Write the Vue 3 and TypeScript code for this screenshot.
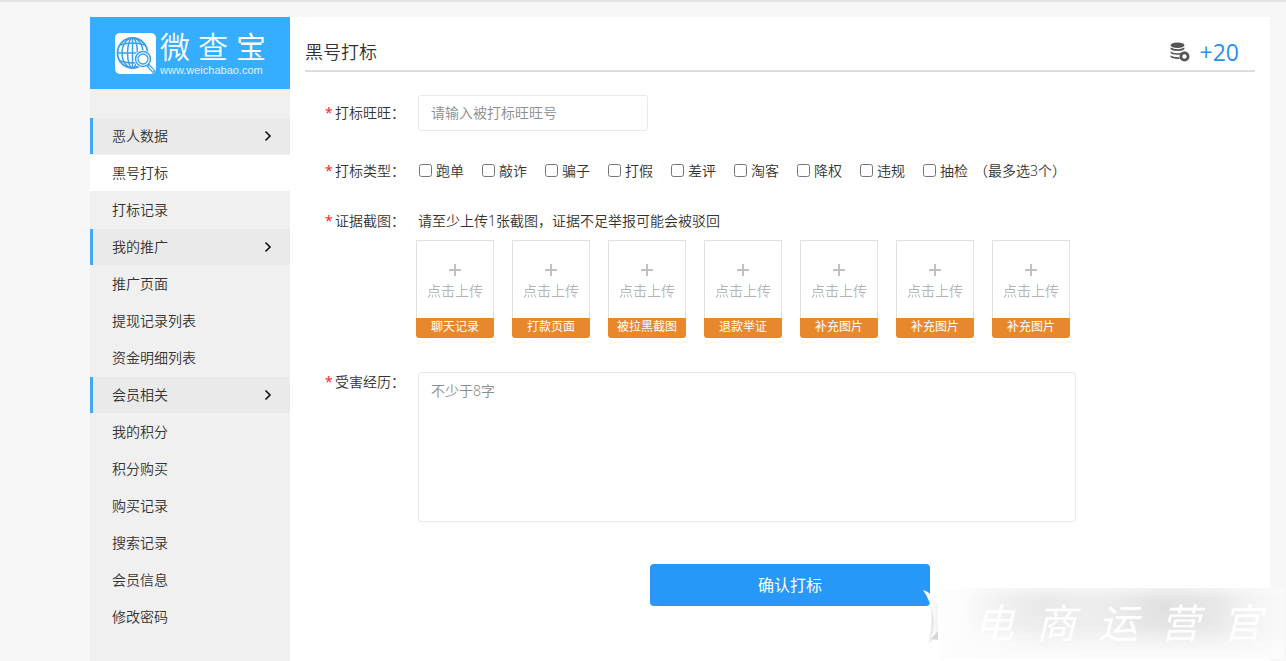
<script setup lang="ts">
import { ref } from 'vue'

interface MenuItem {
  text: string
  group?: boolean
  active?: boolean
}

const menu: MenuItem[] = [
  { text: '恶人数据', group: true },
  { text: '黑号打标', active: true },
  { text: '打标记录' },
  { text: '我的推广', group: true },
  { text: '推广页面' },
  { text: '提现记录列表' },
  { text: '资金明细列表' },
  { text: '会员相关', group: true },
  { text: '我的积分' },
  { text: '积分购买' },
  { text: '购买记录' },
  { text: '搜索记录' },
  { text: '会员信息' },
  { text: '修改密码' },
]

const types: string[] = ['跑单', '敲诈', '骗子', '打假', '差评', '淘客', '降权', '违规', '抽检']
const uploads: string[] = ['聊天记录', '打款页面', '被拉黑截图', '退款举证', '补充图片', '补充图片', '补充图片']
const brand: string[] = ['微', '查', '宝']
const mark: string[] = ['电', '商', '运', '营', '官']

const account = ref('')
const picked = ref<string[]>([])
const story = ref('')
</script>

<template>
  <div class="page">
    <div class="shell">
      <aside class="sidebar">
        <a class="logo" href="#">
          <svg class="logo-icon" viewBox="0 0 41 41" aria-hidden="true">
            <rect width="41" height="41" rx="5" fill="#fff" />
            <g fill="none" stroke="#35a0ee" stroke-width="1.5">
              <circle cx="17.500" cy="20" r="15" stroke-width="1.800" />
              <ellipse cx="17.500" cy="20" rx="5" ry="15" />
              <ellipse cx="17.500" cy="20" rx="10.500" ry="15" />
              <path d="M17.500 5v30M2.500 20h30M5 12q12.500 -4 25 0M5 28q12.500 4 25 0" />
            </g>
            <path d="M31 30l8 8" stroke="#fff" stroke-width="7" />
            <circle cx="28" cy="26" r="9" fill="#fff" />
            <g fill="none" stroke="#35a0ee">
              <circle cx="28" cy="26" r="7.500" stroke-width="1.500" />
              <circle cx="28" cy="26" r="5" stroke-width="1.300" />
              <path d="M32.500 33.500l5.500 6 1.800 -1.600 -5.600 -6z" stroke-width="1.200" />
            </g>
          </svg>
          <span class="brand">
            <span class="brand-name"><span v-for="c in brand" :key="c">{{ c }}</span></span>
            <span class="brand-url">www.weichabao.com</span>
          </span>
        </a>
        <nav class="menu">
          <a
            v-for="item in menu"
            :key="item.text"
            href="#"
            class="item"
            :class="{ group: item.group, active: item.active }"
          >
            {{ item.text }}
            <svg v-if="item.group" class="chevron" viewBox="0 0 8 12" aria-hidden="true">
              <path d="M1.500 1.500L6 6l-4.500 4.500" fill="none" stroke="#111" stroke-width="1.600" />
            </svg>
          </a>
        </nav>
      </aside>

      <main class="main">
        <header class="head">
          <h1>黑号打标</h1>
          <div class="points">
            <svg class="coins" viewBox="0 0 20 20" aria-hidden="true">
              <g fill="#555">
                <ellipse cx="7.500" cy="3.200" rx="7" ry="2.800" />
                <path d="M.5 5.400q7 3.600 14 0v1.400q-1 2.200 -7 2.200T.5 6.800z" />
                <path d="M.5 9.400q7 3.600 14 .2v.3q-3 .4 -4.200 2.600Q2 13.200 .5 10.800z" />
                <path d="M.5 13.400q3 2 8.800 1.800l.4 1.700Q2 17.200 .5 14.800z" />
              </g>
              <circle cx="14.500" cy="14.500" r="3.600" fill="none" stroke="#555" stroke-width="2.800" />
            </svg>
            <span>+20</span>
          </div>
        </header>

        <form class="form" @submit.prevent>
          <div class="row row-account">
            <label class="label" for="account"><i>*</i>打标旺旺：</label>
            <div class="field">
              <input id="account" v-model="account" class="text" type="text" placeholder="请输入被打标旺旺号" />
            </div>
          </div>

          <div class="row row-types" role="group" aria-labelledby="types-label">
            <span id="types-label" class="label"><i>*</i>打标类型：</span>
            <div class="field checks">
              <label v-for="t in types" :key="t" class="check">
                <input v-model="picked" type="checkbox" :value="t" />{{ t }}
              </label>
              <span class="hint">（最多选3个）</span>
            </div>
          </div>

          <div class="row row-shots" role="group" aria-labelledby="shots-label">
            <span id="shots-label" class="label"><i>*</i>证据截图：</span>
            <div class="field">
              <p class="note">请至少上传1张截图，证据不足举报可能会被驳回</p>
              <div class="uploads">
                <div v-for="(u, i) in uploads" :key="i" class="upload">
                  <button type="button" class="drop">
                    <svg viewBox="0 0 12 12" aria-hidden="true">
                      <path d="M6 0v12M0 6h12" stroke="#c0c0c0" stroke-width="2" />
                    </svg>
                    <span>点击上传</span>
                  </button>
                  <span class="tag">{{ u }}</span>
                </div>
              </div>
            </div>
          </div>

          <div class="row row-story">
            <label class="label" for="story"><i>*</i>受害经历：</label>
            <div class="field">
              <textarea id="story" v-model="story" class="area" placeholder="不少于8字"></textarea>
            </div>
          </div>

          <button class="submit" type="submit">确认打标</button>
        </form>
      </main>
    </div>

    <div class="watermark">
      <svg class="curl" viewBox="0 0 20 60" aria-hidden="true">
        <defs>
          <linearGradient id="curl-shade" x1="0" y1="0" x2="1" y2="0">
            <stop offset="0" stop-color="#d0d0d0" stop-opacity="0" />
            <stop offset="1" stop-color="#c4c4c4" />
          </linearGradient>
          <linearGradient id="curl-leaf" x1="0" y1="0" x2="1" y2="0">
            <stop offset="0.500" stop-color="#fff" />
            <stop offset="1" stop-color="#f2f2f2" />
          </linearGradient>
        </defs>
        <path d="M7 14Q13 32 5 58L11 51Q17 30 9 14z" fill="url(#curl-shade)" opacity="0.800" />
        <path d="M1 2Q10 4 16 17V43L9 51Q17 26 1 2z" fill="url(#curl-leaf)" />
        <path d="M9 51L16 43V52z" fill="#d6d6d6" />
      </svg>
      <div class="mark-text"><span v-for="c in mark" :key="c">{{ c }}</span></div>
    </div>
  </div>
</template>

<style>
body {
  margin: 0;
  background: #f7f7f7;
}
</style>

<style scoped>
* {
  box-sizing: border-box;
}

.page {
  position: relative;
  min-height: 100vh;
  padding: 15px 16px 0 90px;
  border-top: 2px solid #e4e4e4;
  background: #f7f7f7;
  color: #333;
  font: 14px/20px "Noto Sans", "Noto Sans CJK SC", sans-serif;
  font-weight: 350;
  overflow: hidden;
}

.page button,
.page input,
.page textarea {
  font-family: inherit;
  font-size: 14px;
  font-weight: inherit;
}

.shell {
  display: flex;
  min-height: calc(100vh - 17px);
  background: #fff;
}

.sidebar {
  flex: 0 0 200px;
  background: #f0f0f0;
}

.logo {
  display: flex;
  align-items: center;
  gap: 4px;
  height: 72px;
  padding-left: 25px;
  background: #36aeff;
  color: #fff;
  text-decoration: none;
}

.logo-icon {
  width: 41px;
  height: 41px;
}

.brand {
  display: flex;
  flex-direction: column;
}

.brand-name {
  display: flex;
  gap: 8px;
  font-size: 30px;
  line-height: 34px;
}

.brand-url {
  font: 11px/12px "Liberation Sans", Arial, sans-serif;
  opacity: 0.85;
}

.menu {
  display: flex;
  flex-direction: column;
  gap: 1px;
  padding-top: 29px;
}

.item {
  display: flex;
  align-items: center;
  justify-content: space-between;
  height: 36px;
  padding: 0 18px 0 22px;
  color: #333;
  text-decoration: none;
}

.item.group {
  padding-left: 19px;
  border-left: 3px solid #40a9f0;
  background: #eaeaea;
}

.item.active {
  background: #fff;
}

.chevron {
  width: 8px;
  height: 12px;
}

.main {
  flex: 1;
  min-width: 0;
  padding: 0 15px;
}

.head {
  display: flex;
  align-items: center;
  justify-content: space-between;
  height: 55px;
  padding-top: 16px;
  border-bottom: 2px solid #dcdcdc;
}

.head h1 {
  margin: 0;
  font-size: 18px;
  font-weight: inherit;
  line-height: 24px;
}

.points {
  display: flex;
  align-items: center;
  gap: 10px;
  padding-right: 16px;
  color: #2b90ee;
  font: 23px/28px "Open Sans", "Noto Sans", sans-serif;
}

.coins {
  width: 20px;
  height: 20px;
}

.form {
  display: flex;
  flex-direction: column;
  padding: 23px 0 0 20px;
}

.row {
  display: flex;
  align-items: flex-start;
}

.label {
  flex: 0 0 91px;
  white-space: nowrap;
}

.label i {
  display: inline-block;
  width: 10px;
  color: #f02d2d;
  font-style: normal;
  font-weight: 400;
}

.field {
  flex: 1;
  min-width: 0;
}

.row-account .label {
  padding-top: 8px;
}

.text {
  display: block;
  width: 230px;
  height: 36px;
  margin-left: 2px;
  padding: 0 12px 2px;
  border: 1px solid #e9e9e9;
  border-radius: 3px;
  background: #fff;
  color: #333;
}

.text::placeholder,
.area::placeholder {
  color: #8c8c8c;
  opacity: 1;
}

.row-types {
  margin-top: 30px;
}

.checks {
  display: flex;
  flex-wrap: wrap;
  padding-left: 3px;
}

.check {
  display: flex;
  align-items: center;
  margin-right: 18px;
}

.check input {
  width: 13px;
  height: 13px;
  margin: 0 4px 2px 0;
}

.hint {
  margin-left: -12px;
}

.row-shots {
  margin-top: 30px;
}

.note {
  margin: 0 0 9px 2px;
}

.uploads {
  display: flex;
  flex-wrap: wrap;
  gap: 18px;
}

.upload {
  width: 78px;
}

.drop {
  display: flex;
  flex-direction: column;
  align-items: center;
  justify-content: center;
  gap: 5px;
  width: 100%;
  height: 78px;
  padding: 6px 0 0;
  border: 1px solid #e0e0e0;
  border-bottom: 0;
  background: #fff;
  color: #b4b4b4;
  line-height: 20px;
}

.drop svg {
  width: 12px;
  height: 12px;
}

.tag {
  display: block;
  height: 20px;
  border-radius: 0 0 3px 3px;
  background: #e8882d;
  color: #fff;
  font-size: 12px;
  font-weight: 400;
  line-height: 18px;
  text-align: center;
}

.row-story {
  margin-top: 34px;
}

.area {
  display: block;
  width: calc(100% - 2px);
  max-width: 658px;
  height: 150px;
  margin-left: 2px;
  padding: 8px 12px;
  border: 1px solid #e9e9e9;
  border-radius: 3px;
  background: #fff;
  color: #333;
  line-height: 20px;
  resize: none;
}

.submit {
  align-self: center;
  width: 280px;
  height: 42px;
  margin-top: 42px;
  padding: 0 0 2px;
  border: 0;
  border-radius: 4px;
  background: #2798f7;
  color: #fff;
}

.page .submit {
  font-size: 16px;
  font-weight: 400;
}

.watermark {
  position: absolute;
  right: 2px;
  bottom: 2px;
  width: 344px;
  height: 71px;
  background:
    radial-gradient(ellipse 80px 48px at 66% 30%, rgba(218, 218, 218, 0.7), rgba(228, 228, 228, 0)),
    radial-gradient(ellipse 80px 48px at 30% 26%, rgba(228, 228, 228, 0.7), rgba(236, 236, 236, 0)),
    linear-gradient(90deg, #fefefe, #f3f3f3 30%, #ededed 80%, #f9f9f9);
}

.watermark::after {
  content: "";
  position: absolute;
  inset: 0;
  background: linear-gradient(180deg, rgba(252, 252, 252, 0.5), rgba(252, 252, 252, 0) 15%, rgba(252, 252, 252, 0) 55%, #fcfcfc);
}

.curl {
  position: absolute;
  left: -18px;
  top: 0;
  width: 20px;
  height: 60px;
}

.mark-text {
  position: relative;
  z-index: 1;
  display: flex;
  justify-content: space-between;
  padding: 11px 22px 0 34px;
  color: #fff;
  font-size: 40px;
  font-style: italic;
  font-weight: 400;
  line-height: 48px;
}
</style>
